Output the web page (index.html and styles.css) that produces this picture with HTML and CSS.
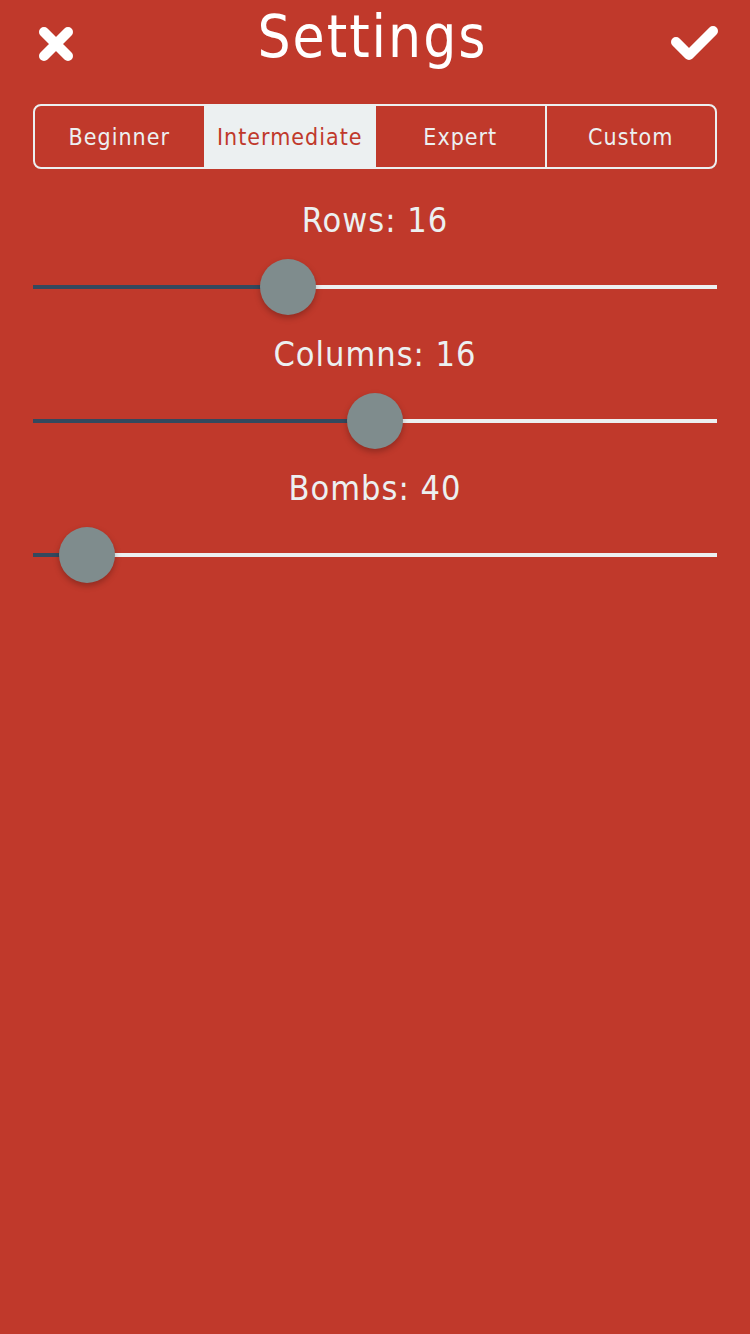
FILE: index.html
```html
<!DOCTYPE html>
<html>
<head>
<meta charset="utf-8">
<link rel="stylesheet" href="styles.css">
</head>
<body>
<div class="page">
  <header class="header">
    <button class="icon-btn close" aria-label="Close">
      <svg width="36" height="36" viewBox="0 0 36 36"><path d="M6 6 L30 30 M30 6 L6 30" stroke="#fff" stroke-width="10" stroke-linecap="round"/></svg>
    </button>
    <h1 class="title">Settings</h1>
    <button class="icon-btn" aria-label="Save">
      <svg width="48" height="36" viewBox="0 0 48 36"><path d="M5 16 L18 29 L42 5" fill="none" stroke="#fff" stroke-width="10" stroke-linecap="round" stroke-linejoin="round"/></svg>
    </button>
  </header>

  <div class="segments">
    <div class="segment">Beginner</div>
    <div class="segment active">Intermediate</div>
    <div class="segment">Expert</div>
    <div class="segment">Custom</div>
  </div>

  <div class="settings">
    <div class="setting">
      <div class="label">Rows: 16</div>
      <div class="slider">
        <div class="track"><div class="fill" style="width:37.3%"></div><div class="rest"></div></div>
        <div class="thumb" style="left:37.3%"></div>
      </div>
    </div>

    <div class="setting">
      <div class="label">Columns: 16</div>
      <div class="slider">
        <div class="track"><div class="fill" style="width:50%"></div><div class="rest"></div></div>
        <div class="thumb" style="left:50%"></div>
      </div>
    </div>

    <div class="setting">
      <div class="label">Bombs: 40</div>
      <div class="slider">
        <div class="track"><div class="fill" style="width:7.9%"></div><div class="rest"></div></div>
        <div class="thumb" style="left:7.9%"></div>
      </div>
    </div>
  </div>
</div>
</body>
</html>
```

FILE: styles.css
```css
html, body {
  margin: 0;
  padding: 0;
  background: #c0392b;
  height: 100%;
}
body {
  font-family: "DejaVu Sans Condensed", "DejaVu Sans", sans-serif;
  color: #ecf0f1;
}
.page {
  padding: 0 33px;
}
.header {
  display: flex;
  align-items: center;
  justify-content: space-between;
  height: 88px;
  margin: 0 -2px 0 0;
}
.icon-btn {
  background: none;
  border: 0;
  padding: 0;
  display: flex;
  align-items: center;
  justify-content: center;
  width: 48px;
  height: 48px;
  margin-top: 0;
}
.icon-btn.close {
  margin-left: 5px;
  width: 36px;
}
.title {
  margin: -14px 0 0 0;
  font-weight: normal;
  font-size: 58px;
  letter-spacing: 2px;
  color: #fff;
}
.segments {
  margin-top: 16px;
  display: flex;
  height: 65px;
  border: 2px solid #ecf0f1;
  border-radius: 8px;
  overflow: hidden;
  box-sizing: border-box;
}
.segment {
  flex: 1;
  display: flex;
  align-items: center;
  justify-content: center;
  font-size: 23px;
  letter-spacing: 1px;
  color: #ecf0f1;
  border-left: 2px solid #ecf0f1;
}
.segment:first-child {
  border-left: 0;
}
.segment.active {
  background: #ecf0f1;
  color: #c0392b;
}
.settings {
  display: flex;
  flex-direction: column;
  gap: 19px;
  padding-top: 31px;
}
.setting {
  display: flex;
  flex-direction: column;
  gap: 19px;
}
.label {
  text-align: center;
  font-size: 34px;
  letter-spacing: 1px;
  line-height: 40px;
}
.slider {
  position: relative;
  height: 56px;
}
.track {
  position: absolute;
  left: 0;
  right: 0;
  top: 26px;
  height: 4px;
  display: flex;
}
.fill {
  background: #34495e;
  height: 4px;
}
.rest {
  flex: 1;
  background: #ecf0f1;
  height: 4px;
}
.thumb {
  position: absolute;
  top: 0;
  width: 56px;
  height: 56px;
  margin-left: -28px;
  border-radius: 50%;
  background: #7f8c8d;
  box-shadow: 0 3px 6px rgba(0, 0, 0, 0.25);
}
```
